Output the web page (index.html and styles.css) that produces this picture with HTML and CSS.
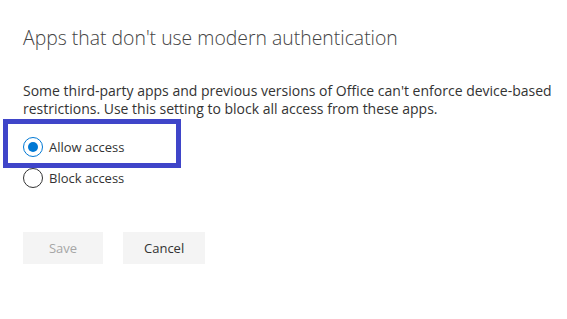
FILE: index.html
```html
<!DOCTYPE html>
<html lang="en">
  <head>
    <meta charset="UTF-8" />
    <meta name="viewport" content="width=device-width, initial-scale=1.0" />
    <title>Modern authentication</title>
    <link rel="stylesheet" href="styles.css">
  </head>
  <body>
    <div id="panel">
      <h2 class="panel-title">Apps that don't use modern authentication</h2>
      <p class="panel-desc">
        Some third-party apps and previous versions of Office can't enforce device-based
        restrictions. Use this setting to block all access from these apps.
      </p>

      <div class="choice-group">
        <label class="choice">
          <span class="highlight"></span>
          <span class="radio checked"></span>
          <span class="choice-text">Allow access</span>
        </label>
        <label class="choice">
          <span class="radio"></span>
          <span class="choice-text">Block access</span>
        </label>
      </div>

      <div class="actions">
        <button class="btn" disabled>Save</button>
        <button class="btn">Cancel</button>
      </div>
    </div>
  </body>
</html>
```

FILE: styles.css
```css
* {
  box-sizing: border-box;
  margin: 0;
  padding: 0;
}

body {
  font-family: "Open Sans", "Liberation Sans", sans-serif;
  background-color: #fff;
  color: #333;
  width: 567px;
  height: 319px;
  overflow: hidden;
}

#panel {
  padding: 24px 0 0 23px;
}

.panel-title {
  font-size: 19.4px;
  font-weight: 300;
  color: #444;
  line-height: 28px;
  margin-bottom: 30px;
}

.panel-desc {
  font-size: 14px;
  line-height: 18px;
  width: 544px;
  color: #333;
}

.choice-group {
  margin-top: 18px;
  display: flex;
  flex-direction: column;
  gap: 9px;
}

.choice {
  position: relative;
  display: flex;
  align-items: center;
  height: 22px;
  font-size: 13px;
  color: #333;
}

.highlight {
  position: absolute;
  left: -20px;
  top: -17px;
  width: 178px;
  height: 49px;
  border: 5px solid #3f45c9;
}

.radio {
  width: 20px;
  height: 20px;
  border: 1px solid #333;
  border-radius: 50%;
  margin-right: 6px;
  display: flex;
  justify-content: center;
  align-items: center;
}

.radio.checked {
  border-color: #0078d4;
}

.radio.checked::after {
  content: "";
  width: 10px;
  height: 10px;
  border-radius: 50%;
  background-color: #0078d4;
}

.actions {
  margin-top: 43px;
  display: flex;
  gap: 20px;
}

.btn {
  font-family: inherit;
  font-size: 13px;
  font-weight: 500;
  height: 32px;
  border: none;
  background-color: #f4f4f4;
  color: #333;
  padding: 0 21px;
  min-width: 80px;
}

.btn:disabled {
  color: #a6a6a6;
}
```
